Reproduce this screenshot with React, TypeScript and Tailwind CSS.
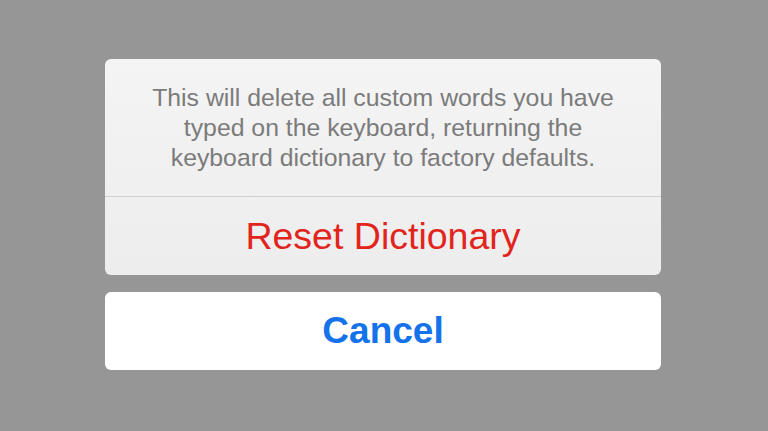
import React from 'react';

// Action sheet: warning message with destructive action, and separate cancel button
export default function App() {
  const lines = [
    'This will delete all custom words you have',
    'typed on the keyboard, returning the',
    'keyboard dictionary to factory defaults.',
  ];

  return (
    <div
      className="w-[768px] h-[431px] bg-[#969696] flex flex-col items-center justify-center gap-[17px] pr-[2px] pb-[2px]"
      style={{ fontFamily: '"Liberation Sans", Arial, sans-serif' }}
    >
      <div className="w-[556px] rounded-[6px] overflow-hidden bg-gradient-to-b from-[#f4f4f4] to-[#ededed] flex flex-col">
        <div className="h-[137px] flex flex-col items-center justify-center text-[24.8px] leading-[30px] text-[#7b7b7b]">
          {lines.map((l) => (
            <span key={l}>{l}</span>
          ))}
        </div>
        <div className="h-px bg-[#d0d0d0]" />
        <button className="h-[78px] flex items-center justify-center text-[37.5px] text-[#e2251c]">
          Reset Dictionary
        </button>
      </div>

      <button className="w-[556px] h-[78px] rounded-[6px] bg-white flex items-center justify-center text-[37px] font-bold text-[#1472ea]">
        Cancel
      </button>
    </div>
  );
}
